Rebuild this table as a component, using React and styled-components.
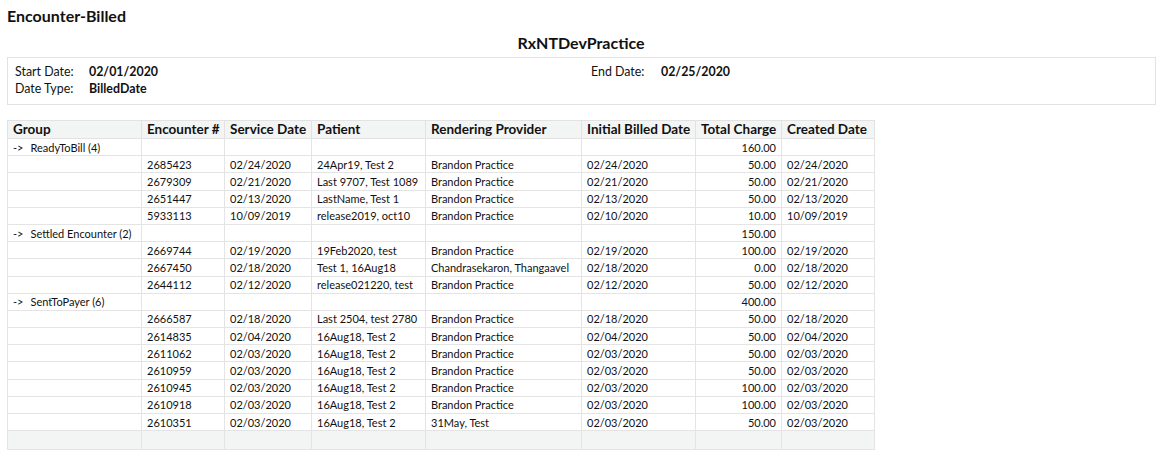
import React from "react";
import styled, { createGlobalStyle } from "styled-components";

const Global = createGlobalStyle`
  html, body { margin: 0; padding: 0; background: #fff; }
  body { font-family: Lato, "Open Sans", sans-serif; color: #111; }
`;

const Page = styled.div`
  padding: 6px 10px 0 7px;
  width: 1165px;
  box-sizing: border-box;
`;

const Title = styled.h1`
  margin: 0;
  font-size: 16px;
  font-weight: 700;
  line-height: 20px;
`;

const Practice = styled.h2`
  margin: 7px 0 0;
  font-size: 16px;
  font-weight: 700;
  line-height: 20px;
  text-align: center;
`;

const InfoBox = styled.div`
  margin-top: 4px;
  border: 1px solid #e2e2e2;
  width: 1149px;
  box-sizing: border-box;
  height: 48px;
  padding: 5px 7px;
  display: grid;
  grid-template-columns: 576px 1fr;
  font-size: 12.4px;
`;

const InfoCol = styled.div`
  display: flex;
  flex-direction: column;
`;

const InfoRow = styled.div`
  display: flex;
  line-height: 17px;
`;

const Label = styled.span`
  width: ${(p) => p.$w}px;
`;

const Value = styled.span`
  font-weight: 700;
`;

const Table = styled.table`
  margin-top: 15px;
  border-collapse: collapse;
  font-size: 11px;
  table-layout: fixed;
  width: 867px;
`;

const Th = styled.th`
  background: #f3f4f4;
  text-align: left;
  font-weight: 700;
  font-size: 13.5px;
  height: 17px;
  padding: 0 5px;
  border: 1px solid #e2e2e2;
  white-space: nowrap;
  line-height: 15px;
`;

const Td = styled.td`
  height: ${(p) => (p.$shade ? 18 : 16.2)}px;
  padding: 0 5px;
  border: 1px solid #e4e4e4;
  white-space: nowrap;
  line-height: 15px;
  text-align: ${(p) => (p.$right ? "right" : "left")};
  background: ${(p) => (p.$shade ? "#f3f4f4" : "#fff")};
`;

const Arrow = styled.span`
  margin-right: 7px;
`;

const cols = [134, 83, 87, 114, 156, 114, 86, 93];
const headers = [
  "Group",
  "Encounter #",
  "Service Date",
  "Patient",
  "Rendering Provider",
  "Initial Billed Date",
  "Total Charge",
  "Created Date",
];

const groups = [
  {
    name: "ReadyToBill (4)",
    total: "160.00",
    rows: [
      ["2685423", "02/24/2020", "24Apr19, Test 2", "Brandon Practice", "02/24/2020", "50.00", "02/24/2020"],
      ["2679309", "02/21/2020", "Last 9707, Test 1089", "Brandon Practice", "02/21/2020", "50.00", "02/21/2020"],
      ["2651447", "02/13/2020", "LastName, Test 1", "Brandon Practice", "02/13/2020", "50.00", "02/13/2020"],
      ["5933113", "10/09/2019", "release2019, oct10", "Brandon Practice", "02/10/2020", "10.00", "10/09/2019"],
    ],
  },
  {
    name: "Settled Encounter (2)",
    total: "150.00",
    rows: [
      ["2669744", "02/19/2020", "19Feb2020, test", "Brandon Practice", "02/19/2020", "100.00", "02/19/2020"],
      ["2667450", "02/18/2020", "Test 1, 16Aug18", "Chandrasekaron, Thangaavel", "02/18/2020", "0.00", "02/18/2020"],
      ["2644112", "02/12/2020", "release021220, test", "Brandon Practice", "02/12/2020", "50.00", "02/12/2020"],
    ],
  },
  {
    name: "SentToPayer (6)",
    total: "400.00",
    rows: [
      ["2666587", "02/18/2020", "Last 2504, test 2780", "Brandon Practice", "02/18/2020", "50.00", "02/18/2020"],
      ["2614835", "02/04/2020", "16Aug18, Test 2", "Brandon Practice", "02/04/2020", "50.00", "02/04/2020"],
      ["2611062", "02/03/2020", "16Aug18, Test 2", "Brandon Practice", "02/03/2020", "50.00", "02/03/2020"],
      ["2610959", "02/03/2020", "16Aug18, Test 2", "Brandon Practice", "02/03/2020", "50.00", "02/03/2020"],
      ["2610945", "02/03/2020", "16Aug18, Test 2", "Brandon Practice", "02/03/2020", "100.00", "02/03/2020"],
      ["2610918", "02/03/2020", "16Aug18, Test 2", "Brandon Practice", "02/03/2020", "100.00", "02/03/2020"],
      ["2610351", "02/03/2020", "16Aug18, Test 2", "31May, Test", "02/03/2020", "50.00", "02/03/2020"],
    ],
  },
];

export default function App() {
  return (
    <>
      <Global />
      <Page>
        <Title>Encounter-Billed</Title>
        <Practice>RxNTDevPractice</Practice>
        <InfoBox>
          <InfoCol>
            <InfoRow>
              <Label $w={74}>Start Date:</Label>
              <Value>02/01/2020</Value>
            </InfoRow>
            <InfoRow>
              <Label $w={74}>Date Type:</Label>
              <Value>BilledDate</Value>
            </InfoRow>
          </InfoCol>
          <InfoCol>
            <InfoRow>
              <Label $w={70}>End Date:</Label>
              <Value>02/25/2020</Value>
            </InfoRow>
          </InfoCol>
        </InfoBox>
        <Table>
          <colgroup>
            {cols.map((w, i) => (
              <col key={i} style={{ width: w }} />
            ))}
          </colgroup>
          <thead>
            <tr>
              {headers.map((h) => (
                <Th key={h}>{h}</Th>
              ))}
            </tr>
          </thead>
          <tbody>
            {groups.map((g) => (
              <React.Fragment key={g.name}>
                <tr>
                  <Td>
                    <Arrow>-&gt;</Arrow>
                    {g.name}
                  </Td>
                  <Td />
                  <Td />
                  <Td />
                  <Td />
                  <Td />
                  <Td $right>{g.total}</Td>
                  <Td />
                </tr>
                {g.rows.map((r) => (
                  <tr key={r[0]}>
                    <Td />
                    {r.map((c, i) => (
                      <Td key={i} $right={i === 5}>
                        {c}
                      </Td>
                    ))}
                  </tr>
                ))}
              </React.Fragment>
            ))}
            <tr>
              {cols.map((_, i) => (
                <Td key={i} $shade />
              ))}
            </tr>
          </tbody>
        </Table>
      </Page>
    </>
  );
}
